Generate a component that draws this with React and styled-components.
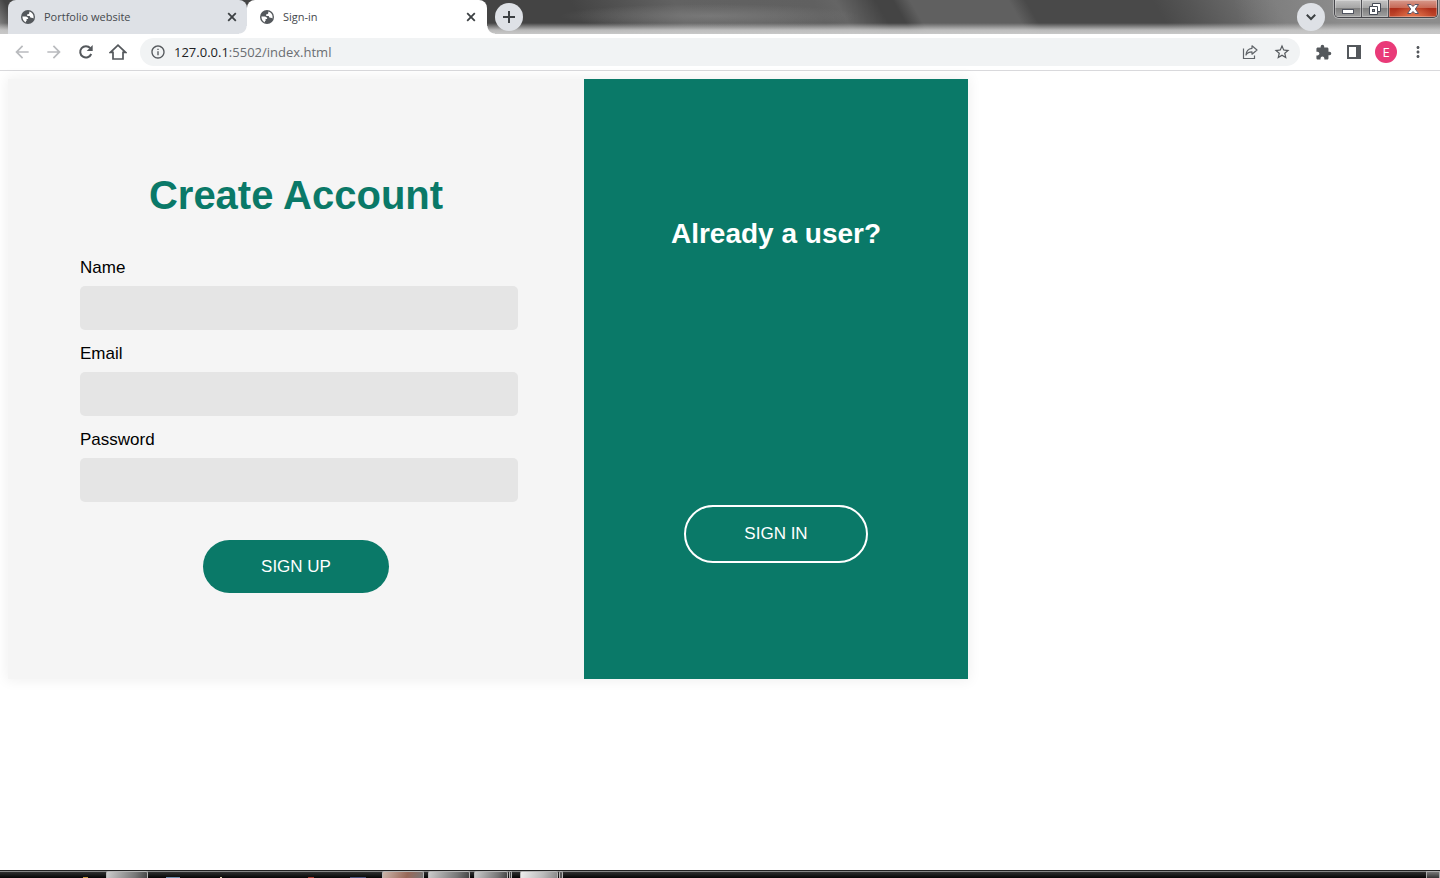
import React from "react";
import styled, { createGlobalStyle } from "styled-components";
import {
  MdArrowBack,
  MdArrowForward,
  MdInfoOutline,
  MdStarBorder,
  MdExtension,
  MdMoreVert,
} from "react-icons/md";

const GlobalStyle = createGlobalStyle`
  * { box-sizing: border-box; }
  body {
    margin: 0;
    background: #fff;
    font-family: "Liberation Sans", Arial, sans-serif;
  }
  button { font-family: inherit; cursor: pointer; }
`;

const teal = "#0a7968";

const Page = styled.div`
  min-height: 100vh;
  display: flex;
  flex-direction: column;
`;

/* Browser frame */

const TabStrip = styled.header`
  display: flex;
  align-items: flex-start;
  height: 34px;
  padding-left: 8px;
  font-family: "Open Sans", "Noto Sans", sans-serif;
  background:
    linear-gradient(to bottom, transparent 23px, rgba(205, 205, 205, 0.85) 30px, #c8c8c8 34px),
    linear-gradient(75deg, transparent 1200px, rgba(145, 145, 145, 0.8) 1300px),
    radial-gradient(ellipse 150px 12px at 710px 16px, rgba(135, 135, 135, 0.6), transparent),
    linear-gradient(60deg, #929292 0, #444 20px, #444 510px, #626262 600px, #606060 720px,
      #656565 740px, #444 775px, #444 790px, #606060 805px, #606060 890px, #494949 905px,
      #494949 1015px, #555 1045px, #777 1120px);
`;

const Tab = styled.div`
  position: relative;
  display: flex;
  align-items: center;
  width: ${(p) => (p.$active ? 240 : 239)}px;
  height: 34px;
  padding: 0 ${(p) => (p.$active ? 10 : 9)}px 0 12px;
  border-radius: 8px 8px 0 0;
  background: ${(p) => (p.$active ? "#fff" : "#dee1e6")};
  color: #45494d;

  &::before,
  &::after {
    content: "";
    display: ${(p) => (p.$active ? "block" : "none")};
    position: absolute;
    bottom: 0;
    width: 8px;
    height: 8px;
  }
  &::before {
    left: -8px;
    background: radial-gradient(circle at 0 0, transparent 7px, #fff 8px);
  }
  &::after {
    right: -8px;
    background: radial-gradient(circle at 100% 0, transparent 7px, #fff 8px);
  }
`;

const TabLabel = styled.button`
  flex: 1;
  display: flex;
  align-items: center;
  gap: 8px;
  padding: 0;
  border: 0;
  background: none;
  color: inherit;
  font-size: 11px;
  line-height: 16px;
  text-align: left;
`;

const GlyphButton = styled.button`
  display: flex;
  align-items: center;
  justify-content: center;
  flex: none;
  width: 20px;
  height: 20px;
  padding: 0;
  border: 0;
  background: none;
  color: ${(p) => p.$color || "#54585c"};
`;

const TabClose = styled(GlyphButton)`
  width: 12px;
  height: 16px;
`;

const RoundButton = styled(GlyphButton)`
  width: 28px;
  height: 28px;
  margin: 3px 0 0 8px;
  border-radius: 50%;
  background: #dee1e6;
`;

const WindowTools = styled.div`
  display: flex;
  gap: 9px;
  margin-left: auto;
  padding-right: 2px;
`;

const WindowControls = styled.div`
  display: flex;
  height: 18px;
  border: 1px solid #45454a;
  border-top: 0;
  border-radius: 0 0 5px 5px;
  overflow: hidden;
  box-shadow: 0 0 0 1px rgba(255, 255, 255, 0.35);
`;

const WindowButton = styled.button`
  display: flex;
  align-items: center;
  justify-content: center;
  width: ${(p) => (p.$close ? 48 : 27)}px;
  padding: 0;
  border: 0;
  border-right: ${(p) => (p.$close ? "0" : "1px solid #505055")};
  box-shadow: inset 0 0 0 1px rgba(255, 255, 255, 0.3);
  background: ${(p) =>
    p.$close
      ? "radial-gradient(ellipse at 50% 110%, #e87a50, transparent 60%), linear-gradient(#d89a8c 0, #c66a58 45%, #ad2f1b 50%, #c24a2d 100%)"
      : "linear-gradient(#c4c4c4 0, #a6a6a6 45%, #808080 50%, #a0a0a0 100%)"};
`;

const Toolbar = styled.nav`
  display: flex;
  align-items: center;
  height: 37px;
  padding: 0 12px;
  border-bottom: 1px solid #d9d9dc;
  background: #fff;
  font-family: "Open Sans", "Noto Sans", sans-serif;
`;

const NavButtons = styled.div`
  display: flex;
  gap: 12px;
  margin-right: 12px;
`;

const AddressBar = styled.div`
  flex: 1;
  display: flex;
  align-items: center;
  height: 28px;
  padding: 0 8px 0 10px;
  border-radius: 14px;
  background: #f1f3f4;
`;

const Address = styled.a`
  flex: 1;
  margin-left: 8px;
  color: #6a6e72;
  font-size: 13px;
  line-height: 20px;
  text-decoration: none;

  span { color: #202124; }
`;

const BarActions = styled.div`
  display: flex;
  gap: 12px;
`;

const ProfileActions = styled.div`
  display: flex;
  align-items: center;
  gap: 11px;
  margin-left: 13px;
`;

const Avatar = styled.button`
  width: 22px;
  height: 22px;
  padding: 0;
  border: 0;
  border-radius: 50%;
  background: #e93a78;
  color: #fff;
  font-size: 13px;
  line-height: 22px;
`;

/* Sign-up page */

const Content = styled.main`
  flex: 1;
  padding: 8px;
`;

const Card = styled.section`
  display: grid;
  grid-template-columns: 3fr 2fr;
  max-width: 960px;
  min-height: 600px;
  box-shadow: 0 0 12px 2px rgba(0, 0, 0, 0.06);
`;

const SignUpPanel = styled.form`
  display: flex;
  flex-direction: column;
  align-items: center;
  padding: 92px 66px 86px;
  background: #f5f5f5;
`;

const Title = styled.h1`
  margin: 0 0 39px;
  color: ${teal};
  font-size: 40px;
  line-height: 48px;
`;

const Field = styled.div`
  width: 100%;
  margin-bottom: 14px;
  padding-left: 6px;
`;

const Label = styled.label`
  display: block;
  margin-bottom: 8px;
  color: #000;
  font-size: 17px;
  line-height: 20px;
`;

const Input = styled.input`
  display: block;
  width: 100%;
  height: 44px;
  padding: 0 12px;
  border: 0;
  border-radius: 5px;
  background: #e5e5e5;
  font-size: 17px;
`;

const PillButton = styled.button`
  height: ${(p) => (p.$outlined ? 58 : 53)}px;
  padding: 0 58px;
  border: ${(p) => (p.$outlined ? "2px solid #fff" : "0")};
  border-radius: 29px;
  background: ${teal};
  color: #fff;
  font-size: 17px;
  line-height: 20px;
`;

const SubmitRow = styled.div`
  margin-top: 24px;
`;

const SignInPanel = styled.aside`
  display: flex;
  flex-direction: column;
  align-items: center;
  justify-content: space-between;
  padding: 139px 20px 116px;
  background: ${teal};
  color: #fff;
`;

const Subtitle = styled.h2`
  margin: 0;
  font-size: 28px;
  line-height: 32px;
`;

/* Desktop taskbar */

const Taskbar = styled.footer`
  display: flex;
  height: 8px;
  overflow: hidden;
  border-top: 1px solid #222;
  background: linear-gradient(#858585 0, #858585 1px, #303030 1px, #050505 7px);
`;

const TaskItem = styled.span`
  width: ${(p) => p.$width}px;
  margin-left: ${(p) => p.$gap}px;
  border: 1px solid #b5b5b5;
  border-bottom: 0;
  border-radius: 2px 2px 0 0;
  background: ${(p) => p.$fill};
`;

const TaskIcon = styled.span`
  align-self: flex-end;
  width: ${(p) => p.$width}px;
  height: 1px;
  margin-left: ${(p) => p.$gap}px;
  background: ${(p) => p.$color};
`;

const DesktopCorner = styled.span`
  width: 14px;
  margin-left: auto;
  border: 1px solid #aaa;
  border-bottom: 0;
  background: linear-gradient(#777, #333);
`;

const GlobeIcon = () => (
  <svg width="16" height="16" viewBox="0 0 16 16">
    <circle cx="8" cy="8" r="7" fill="#54585c" />
    <path
      d="M2.4 7.6h3.2c1.7 0 2.6.9 2.6 2.4H6.6v1.9h-.7v1.5C3.800 12.600 2.400 10.500 2.400 7.600Z"
      fill="#fff"
    />
    <path
      d="M9.300 2.500c2.500.600 4.300 2.800 4.300 5.500 0 .500-.100 1-.200 1.400-.400-.400-.900-.600-1.500-.600h-.800c-.700 0-1.200-.500-1.200-1.200v-.600H7.200V5.300c1.200 0 2.100-.500 2.100-1.500Z"
      fill="#fff"
    />
  </svg>
);

const TabCloseIcon = () => (
  <svg width="12" height="12" viewBox="0 0 12 12" stroke="#3c4043" strokeWidth="1.8">
    <path d="m2.200 2.200 7.600 7.600m0-7.600-7.600 7.600" />
  </svg>
);

const PlusIcon = () => (
  <svg width="14" height="14" viewBox="0 0 14 14" stroke="#3c4043" strokeWidth="2">
    <path d="M7 1v12M1 7h12" />
  </svg>
);

const ReloadIcon = () => (
  <svg width="16" height="16" viewBox="0 0 16 16">
    <path d="M13.200 10A5.700 5.700 0 1 1 12.300 4.200" fill="none" stroke="#54585c" strokeWidth="2" />
    <path d="M14.700 1v6h-6z" fill="#54585c" />
  </svg>
);

const HomeIcon = () => (
  <svg width="18" height="18" viewBox="0 0 18 18" fill="none" stroke="#54585c" strokeWidth="1.7">
    <path d="M1.500 9.300H4V16h10V9.300h2.500L9 2.200z" />
  </svg>
);

const ShareIcon = () => (
  <svg width="16" height="16" viewBox="0 0 16 16" fill="none" stroke="#5f6368" strokeWidth="1.2">
    <path d="M1.500 4.500v10h11v-3" />
    <path d="M10 1.800 15 6l-5 4.200V7.900C7.300 7.900 5.300 8.800 4 11c.200-3.800 2.400-6.300 6-6.700Z" strokeLinejoin="round" />
  </svg>
);

const SidePanelIcon = () => (
  <svg width="14" height="14" viewBox="0 0 14 14">
    <path d="M0 0h14v14H0zM2 2v10h7V2z" fill="#54585c" fillRule="evenodd" />
  </svg>
);

const ChevronIcon = () => (
  <svg width="12" height="12" viewBox="0 0 12 12" fill="none" stroke="#3c4043" strokeWidth="2">
    <path d="m1.800 3.800 4.200 4.200 4.200-4.200" />
  </svg>
);

const MinimizeIcon = () => (
  <svg width="14" height="12" viewBox="0 0 14 12">
    <rect x="1.5" y="6.5" width="11" height="4" fill="#fff" stroke="#50545f" />
  </svg>
);

const RestoreIcon = () => (
  <svg width="14" height="14" viewBox="0 0 14 14">
    <path d="M4.500 1.500h8v8h-3v3h-8v-8h3z" fill="#fff" stroke="#454a55" />
    <path d="M4.500 4.500h5v5" fill="none" stroke="#454a55" />
    <rect x="4.500" y="7.500" width="2" height="2" fill="#999" stroke="#454a55" />
  </svg>
);

const CloseWindowIcon = () => (
  <svg width="14" height="12" viewBox="0 0 14 12">
    <path
      d="M1.500 1.500h3.500l2 2 2-2h3.500L9.300 6l3.200 4.500H9l-2-2-2 2H1.500L4.700 6z"
      fill="#fff"
      stroke="#555266"
    />
  </svg>
);

const tabs = [
  { title: "Portfolio website", active: false },
  { title: "Sign-in", active: true },
];

const fields = [
  { id: "name", label: "Name", type: "text" },
  { id: "email", label: "Email", type: "email" },
  { id: "password", label: "Password", type: "password" },
];

const grey = "linear-gradient(110deg, #ccc 0, #777 70%, #444)";

export default function App() {
  return (
    <Page>
      <GlobalStyle />
      <TabStrip>
        {tabs.map((tab) => (
          <Tab key={tab.title} $active={tab.active}>
            <TabLabel type="button">
              <GlobeIcon />
              {tab.title}
            </TabLabel>
            <TabClose type="button" aria-label="Close tab">
              <TabCloseIcon />
            </TabClose>
          </Tab>
        ))}
        <RoundButton type="button" aria-label="New tab">
          <PlusIcon />
        </RoundButton>
        <WindowTools>
          <RoundButton type="button" aria-label="Search tabs">
            <ChevronIcon />
          </RoundButton>
          <WindowControls>
            <WindowButton type="button" aria-label="Minimize"><MinimizeIcon /></WindowButton>
            <WindowButton type="button" aria-label="Restore"><RestoreIcon /></WindowButton>
            <WindowButton type="button" aria-label="Close" $close><CloseWindowIcon /></WindowButton>
          </WindowControls>
        </WindowTools>
      </TabStrip>
      <Toolbar>
        <NavButtons>
          <GlyphButton type="button" aria-label="Back" $color="#b9bbbe"><MdArrowBack size={20} /></GlyphButton>
          <GlyphButton type="button" aria-label="Forward" $color="#b9bbbe"><MdArrowForward size={20} /></GlyphButton>
          <GlyphButton type="button" aria-label="Reload"><ReloadIcon /></GlyphButton>
          <GlyphButton type="button" aria-label="Home"><HomeIcon /></GlyphButton>
        </NavButtons>
        <AddressBar>
          <MdInfoOutline size={16} color="#54585c" />
          <Address href="#"><span>127.0.0.1</span>:5502/index.html</Address>
          <BarActions>
            <GlyphButton type="button" aria-label="Share"><ShareIcon /></GlyphButton>
            <GlyphButton type="button" aria-label="Bookmark"><MdStarBorder size={18} /></GlyphButton>
          </BarActions>
        </AddressBar>
        <ProfileActions>
          <GlyphButton type="button" aria-label="Extensions"><MdExtension size={17} /></GlyphButton>
          <GlyphButton type="button" aria-label="Side panel"><SidePanelIcon /></GlyphButton>
          <Avatar type="button">E</Avatar>
          <GlyphButton type="button" aria-label="Menu"><MdMoreVert size={18} /></GlyphButton>
        </ProfileActions>
      </Toolbar>
      <Content>
        <Card>
          <SignUpPanel onSubmit={(e) => e.preventDefault()}>
            <Title>Create Account</Title>
            {fields.map((f) => (
              <Field key={f.id}>
                <Label htmlFor={f.id}>{f.label}</Label>
                <Input id={f.id} type={f.type} />
              </Field>
            ))}
            <SubmitRow>
              <PillButton type="submit">SIGN UP</PillButton>
            </SubmitRow>
          </SignUpPanel>
          <SignInPanel>
            <Subtitle>Already a user?</Subtitle>
            <PillButton type="button" $outlined>SIGN IN</PillButton>
          </SignInPanel>
        </Card>
      </Content>
      <Taskbar>
        <TaskIcon $gap={83} $width={5} $color="#c79a45" />
        <TaskItem $gap={18} $width={42} $fill={grey} />
        <TaskIcon $gap={18} $width={14} $color="#6d8eae" />
        <TaskIcon $gap={40} $width={2} $color="#ddd2b0" />
        <TaskIcon $gap={86} $width={6} $color="#a53b30" />
        <TaskIcon $gap={36} $width={16} $color="#47527c" />
        <TaskItem $gap={16} $width={42} $fill="linear-gradient(110deg, #cbb5aa, #986858 60%, #777)" />
        <TaskItem $gap={4} $width={42} $fill={grey} />
        <TaskItem $gap={4} $width={34} $fill={grey} />
        <TaskItem $gap={1} $width={3} $fill="#444" />
        <TaskItem $gap={8} $width={38} $fill="linear-gradient(110deg, #eee, #bbb 60%, #888)" />
        <TaskItem $gap={1} $width={4} $fill="#555" />
        <DesktopCorner />
      </Taskbar>
    </Page>
  );
}
